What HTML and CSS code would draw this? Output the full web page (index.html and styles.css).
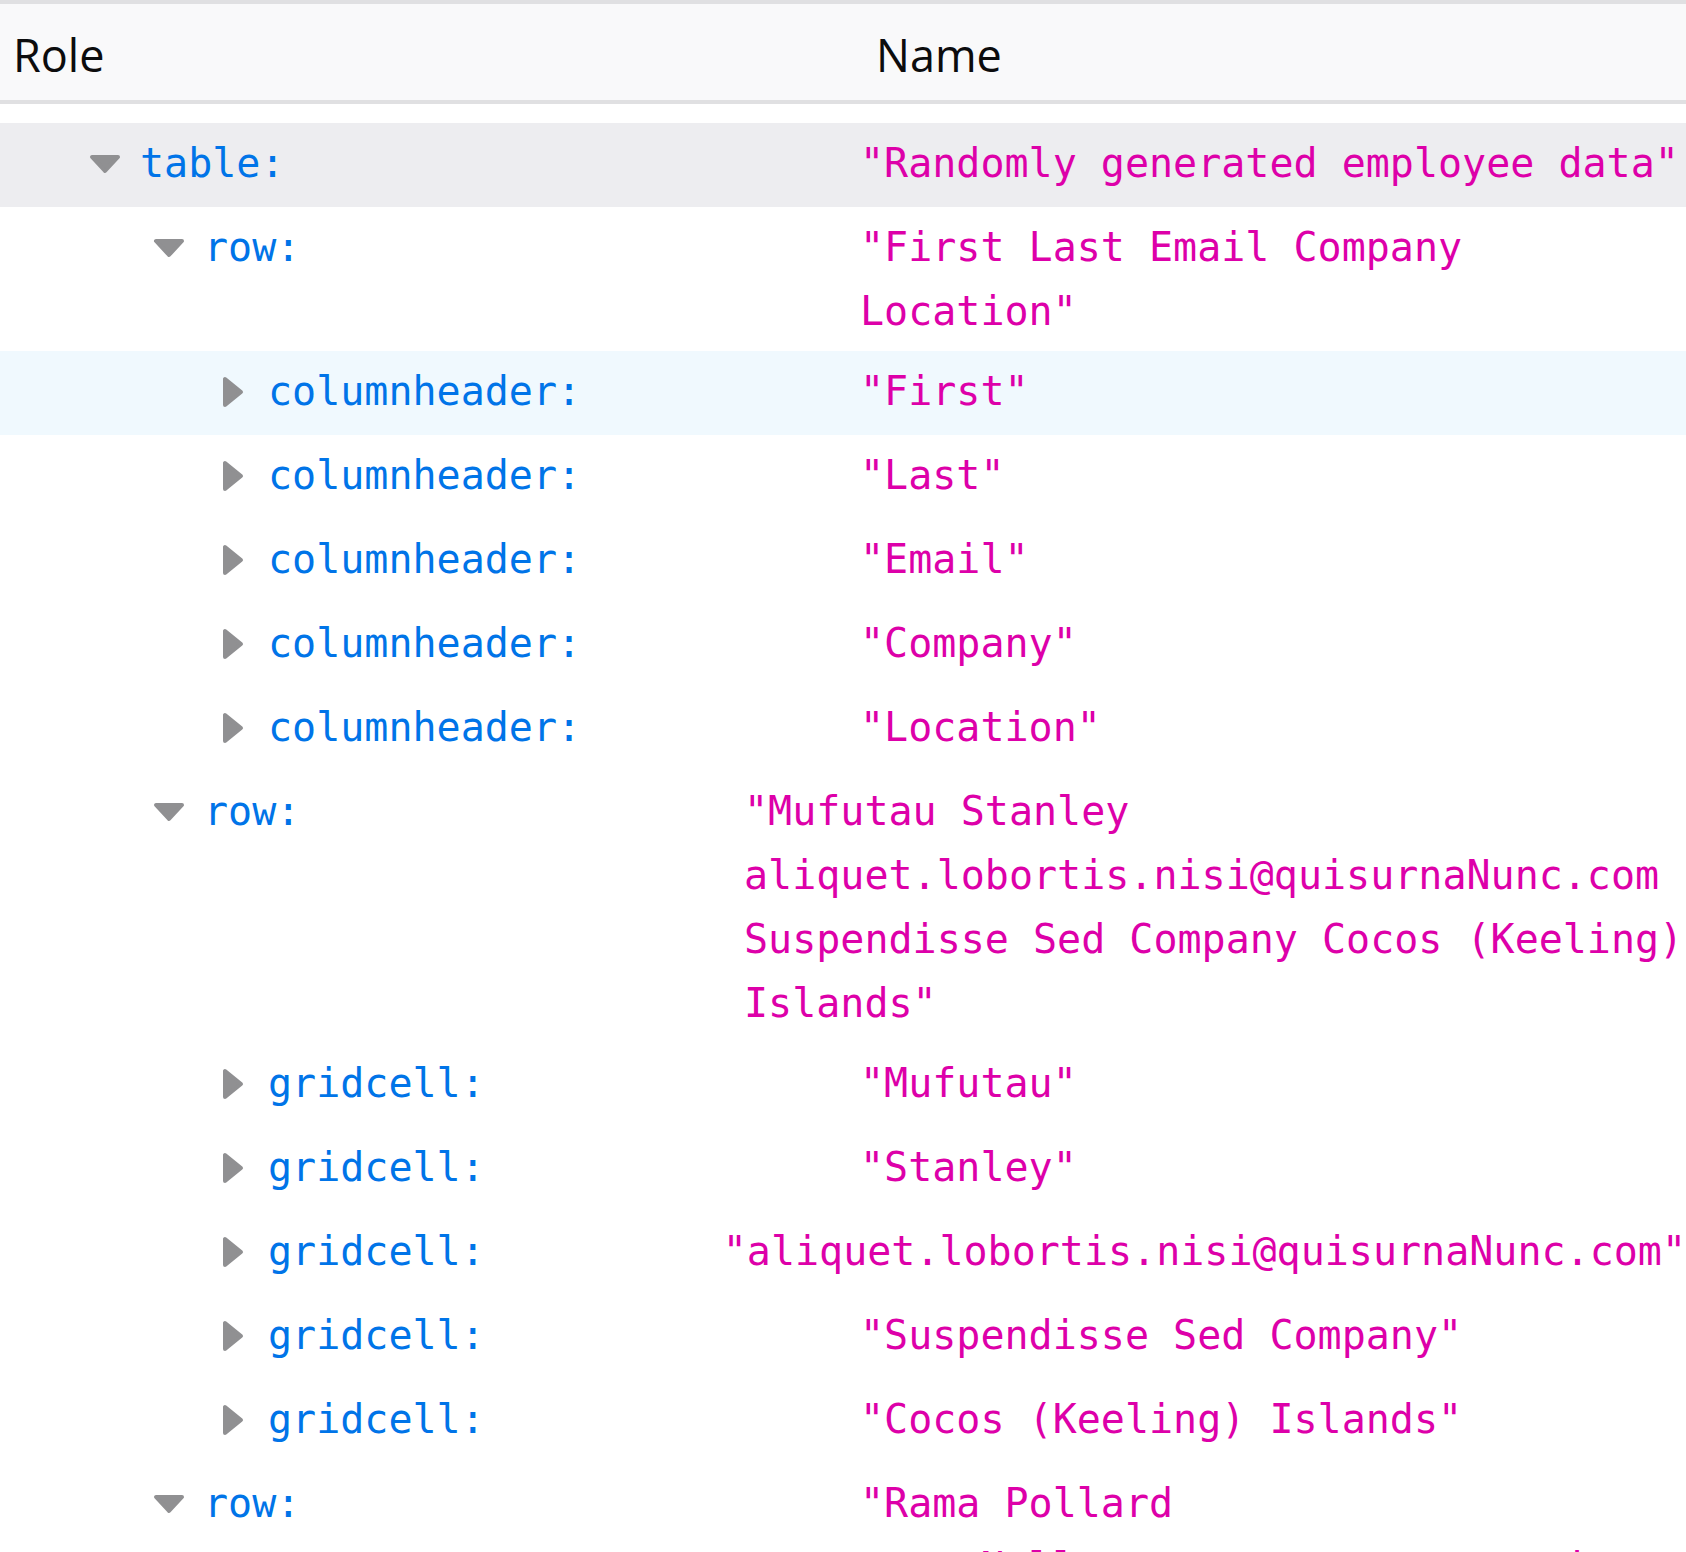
FILE: index.html
```html
<!DOCTYPE html>
<html lang="en">
<head>
<meta charset="utf-8">
<title>Accessibility tree</title>
<link rel="stylesheet" href="styles.css">
</head>
<body>
<div class="panel">
  <div class="head">
    <div class="hcell hrole">Role</div>
    <div class="hcell hname">Name</div>
  </div>
  <div class="tree">
    <div class="node selected">
      <div class="role d0"><span class="twisty"><svg class="ic-down" width="32" height="20" viewBox="0 0 32 20"><path d="M3 3H29L16 17Z"/></svg></span><span class="rtext">table:</span></div>
      <div class="name">"Randomly generated employee data"</div>
    </div>
    <div class="node">
      <div class="role d1"><span class="twisty"><svg class="ic-down" width="32" height="20" viewBox="0 0 32 20"><path d="M3 3H29L16 17Z"/></svg></span><span class="rtext">row:</span></div>
      <div class="name">"First Last Email Company Location"</div>
    </div>
    <div class="node hover">
      <div class="role d2"><span class="twisty"><svg class="ic-right" width="22" height="32" viewBox="0 0 22 32"><path d="M3 3V29L19 16Z"/></svg></span><span class="rtext">columnheader:</span></div>
      <div class="name">"First"</div>
    </div>
    <div class="node">
      <div class="role d2"><span class="twisty"><svg class="ic-right" width="22" height="32" viewBox="0 0 22 32"><path d="M3 3V29L19 16Z"/></svg></span><span class="rtext">columnheader:</span></div>
      <div class="name">"Last"</div>
    </div>
    <div class="node">
      <div class="role d2"><span class="twisty"><svg class="ic-right" width="22" height="32" viewBox="0 0 22 32"><path d="M3 3V29L19 16Z"/></svg></span><span class="rtext">columnheader:</span></div>
      <div class="name">"Email"</div>
    </div>
    <div class="node">
      <div class="role d2"><span class="twisty"><svg class="ic-right" width="22" height="32" viewBox="0 0 22 32"><path d="M3 3V29L19 16Z"/></svg></span><span class="rtext">columnheader:</span></div>
      <div class="name">"Company"</div>
    </div>
    <div class="node">
      <div class="role d2"><span class="twisty"><svg class="ic-right" width="22" height="32" viewBox="0 0 22 32"><path d="M3 3V29L19 16Z"/></svg></span><span class="rtext">columnheader:</span></div>
      <div class="name">"Location"</div>
    </div>
    <div class="node">
      <div class="role d1"><span class="twisty"><svg class="ic-down" width="32" height="20" viewBox="0 0 32 20"><path d="M3 3H29L16 17Z"/></svg></span><span class="rtext">row:</span></div>
      <div class="name wide">"Mufutau Stanley aliquet.lobortis.nisi@quisurnaNunc.com Suspendisse Sed Company Cocos (Keeling) Islands"</div>
    </div>
    <div class="node">
      <div class="role d2"><span class="twisty"><svg class="ic-right" width="22" height="32" viewBox="0 0 22 32"><path d="M3 3V29L19 16Z"/></svg></span><span class="rtext">gridcell:</span></div>
      <div class="name">"Mufutau"</div>
    </div>
    <div class="node">
      <div class="role d2"><span class="twisty"><svg class="ic-right" width="22" height="32" viewBox="0 0 22 32"><path d="M3 3V29L19 16Z"/></svg></span><span class="rtext">gridcell:</span></div>
      <div class="name">"Stanley"</div>
    </div>
    <div class="node">
      <div class="role d2"><span class="twisty"><svg class="ic-right" width="22" height="32" viewBox="0 0 22 32"><path d="M3 3V29L19 16Z"/></svg></span><span class="rtext">gridcell:</span></div>
      <div class="name nowrap">"aliquet.lobortis.nisi@quisurnaNunc.com"</div>
    </div>
    <div class="node">
      <div class="role d2"><span class="twisty"><svg class="ic-right" width="22" height="32" viewBox="0 0 22 32"><path d="M3 3V29L19 16Z"/></svg></span><span class="rtext">gridcell:</span></div>
      <div class="name">"Suspendisse Sed Company"</div>
    </div>
    <div class="node">
      <div class="role d2"><span class="twisty"><svg class="ic-right" width="22" height="32" viewBox="0 0 22 32"><path d="M3 3V29L19 16Z"/></svg></span><span class="rtext">gridcell:</span></div>
      <div class="name">"Cocos (Keeling) Islands"</div>
    </div>
    <div class="node">
      <div class="role d1"><span class="twisty"><svg class="ic-down" width="32" height="20" viewBox="0 0 32 20"><path d="M3 3H29L16 17Z"/></svg></span><span class="rtext">row:</span></div>
      <div class="name">"Rama Pollard nunc.Nulla@ornarecursusacmusad.ca Nunc Sed Associates Tuvalu"</div>
    </div>
  </div>
</div>
</body>
</html>
```
FILE: styles.css
```css
html, body {
  margin: 0;
  padding: 0;
  background: #ffffff;
  overflow: hidden;
}

.panel {
  width: 1686px;
  height: 1552px;
  overflow: hidden;
}

.head {
  display: flex;
  height: 96px;
  background: #f9f9fa;
  border-top: 4px solid #e0e0e2;
  border-bottom: 4px solid #e0e0e2;
  font-family: "Open Sans", "Noto Sans", sans-serif;
  font-size: 45px;
  color: #0c0c0d;
}

.hcell {
  display: flex;
  align-items: center;
  padding-top: 4px;
}

.hrole {
  width: 847px;
  padding-left: 13px;
}

.hname {
  padding-left: 16px;
}

.tree {
  padding-top: 19px;
  font-family: "DejaVu Sans Mono", "Liberation Mono", monospace;
  font-size: 40px;
}

.node {
  display: flex;
  align-items: flex-start;
}

.node.selected {
  background: #ededf0;
}

.node.hover {
  background: #f0f9fe;
}

.role {
  flex: 1 1 0;
  min-width: 0;
  display: flex;
  align-items: center;
  height: 64px;
  padding: 8px 0 12px;
  line-height: 64px;
  color: #0074e8;
  white-space: nowrap;
}

.role.d0 { padding-left: 85px; }
.role.d1 { padding-left: 149px; }
.role.d2 { padding-left: 213px; }

.twisty {
  flex: 0 0 40px;
  height: 64px;
  display: flex;
  align-items: center;
  justify-content: center;
  margin-right: 15px;
}

.twisty svg {
  position: relative;
  top: 1px;
}

.twisty svg path {
  fill: #909092;
  stroke: #909092;
  stroke-width: 4;
  stroke-linejoin: round;
}

.name {
  flex: 0 0 826px;
  padding: 8px 0;
  line-height: 64px;
  color: #dd00a9;
  white-space: normal;
}

.name.wide {
  flex-basis: 942px;
}

.name.nowrap {
  flex-basis: auto;
  white-space: nowrap;
}
```
